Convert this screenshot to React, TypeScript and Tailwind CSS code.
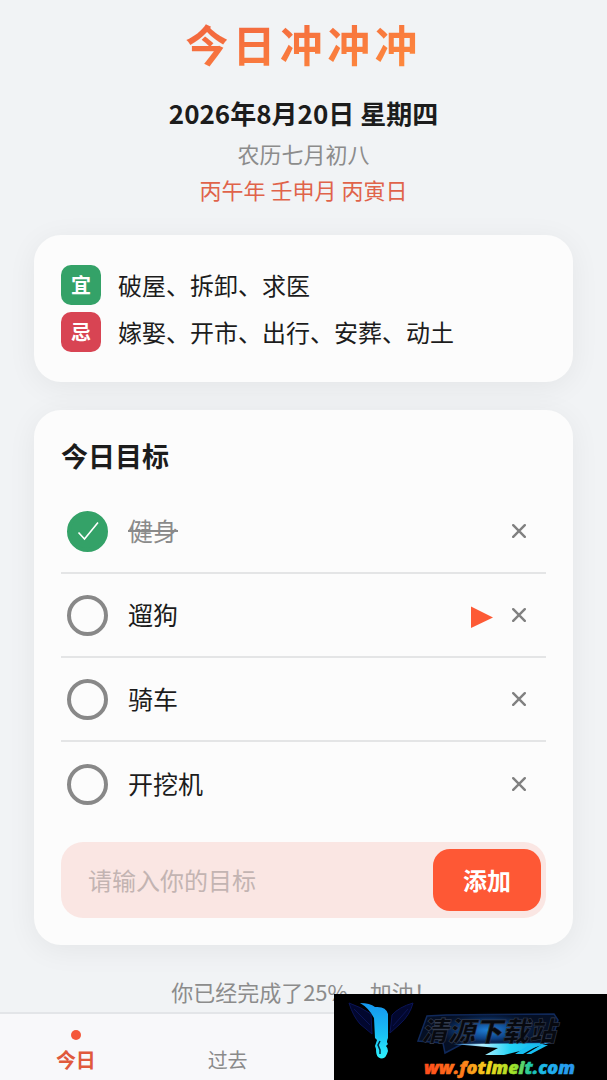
import { useState } from 'react';

interface Goal {
  name: string;
  done?: boolean;
  active?: boolean;
}

const initialGoals: Goal[] = [
  { name: '健身', done: true },
  { name: '遛狗', active: true },
  { name: '骑车' },
  { name: '开挖机' },
];

function Almanac() {
  return (
    <section className="flex flex-col gap-[7px] rounded-[27px] bg-[#fcfcfc] px-[27px] py-[30px] text-2xl leading-10 shadow-[0_5px_30px_rgba(0,0,0,0.06)]">
      <div className="flex items-center gap-[17px]">
        <span className="flex size-10 items-center justify-center rounded-[10px] bg-[#34a268] text-xl font-bold text-white">
          宜
        </span>
        <p>破屋、拆卸、求医</p>
      </div>
      <div className="flex items-center gap-[17px]">
        <span className="flex size-10 items-center justify-center rounded-[10px] bg-[#d84453] text-xl font-bold text-white">
          忌
        </span>
        <p>嫁娶、开市、出行、安葬、动土</p>
      </div>
    </section>
  );
}

function GoalRow({
  goal,
  onToggle,
  onRemove,
}: {
  goal: Goal;
  onToggle: () => void;
  onRemove: () => void;
}) {
  return (
    <li className="flex h-[84px] items-center border-b-2 border-[#e4e5e6] pr-4 pl-[6px] last:border-b-0">
      <label className="flex flex-1 items-center gap-5">
        <span className="grid place-items-center">
          <input
            type="checkbox"
            checked={!!goal.done}
            onChange={onToggle}
            className="col-start-1 row-start-1 size-[41px] appearance-none rounded-full border-4 border-[#888] checked:border-[#34a268] checked:bg-[#34a268]"
          />
          {goal.done && (
            <svg
              className="pointer-events-none col-start-1 row-start-1"
              width="22"
              height="22"
              viewBox="0 0 22 22"
              fill="none"
              stroke="#fff"
              strokeWidth="1.6"
            >
              <path d="M1.5 12.5L7.5 19L21 2.5" />
            </svg>
          )}
        </span>
        <span
          className={goal.done ? 'text-[#8a8a8a] line-through decoration-2' : undefined}
        >
          {goal.name}
        </span>
      </label>
      {goal.active && (
        <button type="button" aria-label="开始" className="mr-[15px] pt-1">
          <svg width="22" height="22" viewBox="0 0 22 22" fill="#fd5a35">
            <path d="M0 0.5L22 11.5L0 22Z" />
          </svg>
        </button>
      )}
      <button type="button" aria-label="删除" onClick={onRemove} className="px-1">
        <svg
          width="14"
          height="14"
          viewBox="0 0 14 14"
          stroke="#808080"
          strokeWidth="2.4"
          strokeLinecap="round"
        >
          <path d="M1.2 1.2L12.8 12.8M12.8 1.2L1.2 12.8" />
        </svg>
      </button>
    </li>
  );
}

function SiteBadge() {
  return (
    <a
      href="#site"
      className="fixed right-0 bottom-0 z-10 block h-[86px] w-[273px] bg-black"
      aria-label="清源下载站"
    >
      <svg width="273" height="86" viewBox="0 0 273 86">
        <defs>
          <linearGradient id="bird" x1="0" y1="0" x2="0" y2="1">
            <stop offset="0" stopColor="#1596ef" />
            <stop offset="0.6" stopColor="#1ac4f5" />
            <stop offset="1" stopColor="#2ff4ff" />
          </linearGradient>
          <linearGradient id="swoosh" x1="0" y1="0" x2="1" y2="0">
            <stop offset="0" stopColor="#1d6fc0" />
            <stop offset="0.3" stopColor="#b5f0ff" />
            <stop offset="0.6" stopColor="#22d3f5" />
            <stop offset="1" stopColor="#19a8e8" />
          </linearGradient>
          <linearGradient id="url" x1="0" y1="0" x2="1" y2="0">
            <stop offset="0" stopColor="#ff4a1c" />
            <stop offset="0.25" stopColor="#ff7a1a" />
            <stop offset="0.42" stopColor="#f5d51c" />
            <stop offset="0.6" stopColor="#9be32a" />
            <stop offset="0.7" stopColor="#1fc7a5" />
            <stop offset="0.8" stopColor="#1cb5f0" />
            <stop offset="1" stopColor="#2a93f0" />
          </linearGradient>
          <radialGradient id="glow">
            <stop offset="0" stopColor="#1f7fd6" />
            <stop offset="0.5" stopColor="#0d3f82" />
            <stop offset="1" stopColor="#061634" stopOpacity="0" />
          </radialGradient>
        </defs>
        <path
          d="M15 9Q27 13 37 20L38 40L26 30Q19 22 15 9ZM79 9Q65 13 58 21L56 39L66 30Q76 21 79 9ZM20 15L36 31M74 15L59 32"
          fill="#02072e"
          stroke="#0a1456"
        />
        <path
          d="M26 9Q36 9 41 13Q52 12 54 20L54 44Q52 48 54 50L52 52Q54 54 54 57Q51 68 44 63Q42 61 42 55L41 52L43 46L41 44L40 24Q35 14 26 9Z"
          fill="url(#bird)"
        />
        <path d="M46 47L44 51L46 56V60" fill="none" stroke="#03283c" strokeWidth="1.5" />
        <path
          d="M84 47L93 22L112 21L220 20L224 26L217 49L130 49L111 59L109 49Z"
          fill="#050f24"
          stroke="#10295a"
          strokeWidth="1.5"
        />
        <ellipse cx="154" cy="36" rx="56" ry="18" fill="url(#glow)" />
        <path d="M119 50L215 49L202 53L170 61L151 61L164 54Z" fill="url(#swoosh)" />
        <path d="M205 51L189 60L181 60L195 51ZM214 51L197 60L192 60L207 51Z" fill="#17bff2" />
        <text
          x="87"
          y="47"
          fontSize="27"
          fontWeight="900"
          fontStyle="italic"
          fill="#07090f"
          stroke="#343d50"
          strokeWidth="0.6"
        >
          清源下载站
        </text>
        <text
          x="90"
          y="80"
          fontSize="18"
          fontWeight="800"
          fontStyle="italic"
          fontFamily="'Open Sans', sans-serif"
          fill="url(#url)"
          stroke="url(#url)"
          strokeWidth="0.6"
        >
          ww.fotimeit.com
        </text>
      </svg>
    </a>
  );
}

export default function App() {
  const [goals, setGoals] = useState(initialGoals);
  const [draft, setDraft] = useState('');

  const toggle = (name: string) =>
    setGoals(goals.map((g) => (g.name === name ? { ...g, done: !g.done } : g)));

  const add = () => {
    if (!draft.trim()) return;
    setGoals([...goals, { name: draft.trim() }]);
    setDraft('');
  };

  return (
    <div className="flex min-h-screen flex-col bg-[#f1f3f5] font-['Noto_Sans_CJK_SC',sans-serif] text-[#1c1c1c]">
      <main className="flex flex-1 flex-col px-[34px] pt-[13px]">
        <header className="flex flex-col items-center">
          <h1 className="bg-linear-to-br from-[#f0603f] to-[#ff8c3c] bg-clip-text text-[43px] leading-[60px] font-bold tracking-widest text-transparent">
            今日冲冲冲
          </h1>
          <p className="mt-[22px] text-[26px] leading-9 font-bold">2026年8月20日 星期四</p>
          <p className="mt-1 text-[22px] leading-9 text-[#8c8c8c]">农历七月初八</p>
          <p className="text-[22px] leading-9 text-[#e0634a]">丙午年 壬申月 丙寅日</p>
        </header>

        <div className="mt-7 flex flex-col gap-7">
          <Almanac />

          <section className="rounded-[27px] bg-[#fcfcfc] p-[27px] shadow-[0_5px_30px_rgba(0,0,0,0.06)]">
            <h2 className="text-[27px] leading-[38px] font-bold">今日目标</h2>
            <ul className="mt-[15px] text-[25px]">
              {goals.map((goal) => (
                <GoalRow
                  key={goal.name}
                  goal={goal}
                  onToggle={() => toggle(goal.name)}
                  onRemove={() => setGoals(goals.filter((g) => g.name !== goal.name))}
                />
              ))}
            </ul>
            <form
              className="mt-4 flex h-[76px] rounded-[22px] bg-[#fae6e3] py-[7px] pr-[5px] pl-[27px]"
              onSubmit={(e) => {
                e.preventDefault();
                add();
              }}
            >
              <input
                type="text"
                aria-label="目标"
                placeholder="请输入你的目标"
                value={draft}
                onChange={(e) => setDraft(e.target.value)}
                className="min-w-0 flex-1 bg-transparent text-2xl outline-none placeholder:text-[#c3b4b2]"
              />
              <button
                type="submit"
                className="w-[108px] rounded-[17px] bg-[#fe5835] text-2xl font-bold text-white"
              >
                添加
              </button>
            </form>
          </section>
        </div>

        <p className="mt-7 text-center text-[22px] leading-9 text-[#8c8c8c]">
          你已经完成了25%，加油！
        </p>
      </main>

      <nav className="sticky bottom-0 grid h-[68px] grid-cols-4 border-t-2 border-[#e3e5e8] bg-[#f8f8fa] text-xl">
        <a href="#today" className="flex flex-col items-center pt-4 font-bold text-[#e0593c]">
          <span className="size-[10px] rounded-full bg-[#f4573a]" />
          <span className="leading-10">今日</span>
        </a>
        <a href="#past" className="flex flex-col items-center pt-[26px] text-[#8a8a8a]">
          <span className="leading-10">过去</span>
        </a>
      </nav>
      <SiteBadge />
    </div>
  );
}
